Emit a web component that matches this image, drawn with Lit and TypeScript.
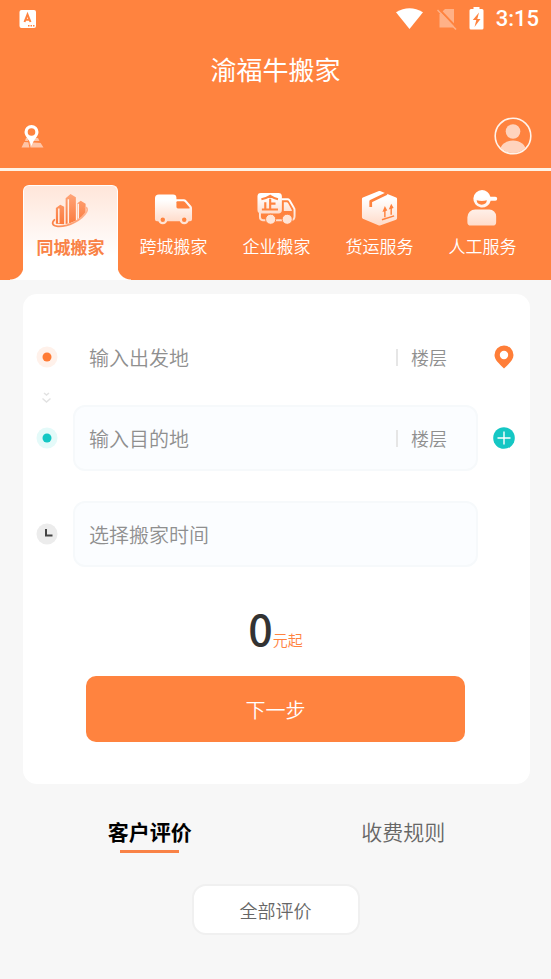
import { LitElement, html, css, svg } from "lit";
import { customElement, state } from "lit/decorators.js";
import { classMap } from "lit/directives/class-map.js";

const fade = svg`<defs>
  <linearGradient id="g" x1="0" y1="0" x2="0" y2="1">
    <stop offset="0.2" stop-color="#fff" /><stop offset="1" stop-color="#ffdccb" />
  </linearGradient>
</defs>`;

const cityIcon = html`<svg class="service-icon" viewBox="0 0 40 40" aria-hidden="true">
  <defs>
    <linearGradient id="c" x1="0" y1="0" x2="0" y2="1">
      <stop offset="0" stop-color="#ffa579" /><stop offset="1" stop-color="#fb7a3c" />
    </linearGradient>
    <linearGradient id="d" x1="0" y1="0" x2="1" y2="0">
      <stop offset="0" stop-color="#fb8449" /><stop offset="1" stop-color="#ffb592" />
    </linearGradient>
  </defs>
  <path fill="url(#c)" d="M5 17.500 9.500 14l4 2.200V34L5 33.500zM15 7.500 20 3l5.500 3.500v24q-5 2.500-10.500 3.300zM27 12.500l3.500-2.500 5 3v9q-3 4.500-8.500 7.500z" />
  <path fill="none" stroke="#fff1e9" stroke-width="1.500" d="M8 18v15M17.800 8.500V33M28 13v15.500" />
  <path fill="none" stroke="url(#d)" stroke-width="1.800" stroke-linecap="round" d="M3.500 29.500C.500 32.500 1 35.800 7 36.300c11 .6 25-7 29.500-15 1.200-2.200.6-4-1-4.500" />
</svg>`;

const truckIcon = html`<svg class="service-icon" viewBox="0 0 40 40" aria-hidden="true">
  ${fade}
  <path fill="url(#g)" d="M5 4.500h14.500a3.500 3.500 0 0 1 3.500 3.500v1.500h7.500q1.600 0 2.700 1.200l5 5.800q.8 1 .8 2.200V30a2 2 0 0 1-2 2H3a2 2 0 0 1-2-2V8.500a4 4 0 0 1 4-4z" />
  <path fill="#ff833f" d="M24 11.500h6q1 0 1.700.8l4.800 5.700q.5.900-.5.900H24.500q-1.500 0-1.500-1.500v-4.900q0-1 1-1z" />
  <g fill="#ff833f" stroke="#ffe4d6" stroke-width="2.400"><circle cx="9" cy="30.500" r="3.500" /><circle cx="31" cy="30.500" r="3.500" /></g>
</svg>`;

const companyIcon = html`<svg class="service-icon" viewBox="0 0 40 40" aria-hidden="true">
  ${fade}
  <path fill="none" stroke="url(#g)" stroke-width="2" stroke-linejoin="round" d="M3 23v4.500Q3 31 6 31h28.500q4 0 4-4v-6.500q0-1.200-.7-2.300l-4.500-7.700q-.8-1-2-1H25" />
  <path fill="url(#g)" d="M27.500 12.500h3q.8 0 1.300.8l3.600 6.700q.4.800.4 1.500h-8.300zM4 3h18a3.500 3.500 0 0 1 3.500 3.500v14A3.500 3.500 0 0 1 22 24H4a3.500 3.500 0 0 1-3.500-3.500v-14A3.500 3.500 0 0 1 4 3z" />
  <path fill="none" stroke="#ff833f" stroke-width="2.200" d="M4.500 9.500q5-1 9-3.500 4 2.500 8 3.500M13.500 9v10.500M13.500 14h5.500M8.500 12.500v7M5 20h16.500" />
  <g fill="#ffe4d6" stroke="#ff833f"><circle cx="14" cy="30" r="5.200" /><circle cx="31" cy="30" r="5.200" /></g>
</svg>`;

const boxIcon = html`<svg class="service-icon" viewBox="0 0 40 40" aria-hidden="true">
  ${fade}
  <path fill="url(#g)" stroke="url(#g)" stroke-width="3" stroke-linejoin="round" d="M20 2.500 36.500 9v20L20 35 3.500 28V9z" />
  <path fill="none" stroke="#ff833f" stroke-width="2.800" stroke-linejoin="round" d="M27.500 3.500 11 11.500v6" />
  <path fill="none" stroke="#ff833f" stroke-width="1.500" d="M22.500 30.500 35 26.500M25.500 28v-9M32 25.500v-9" />
  <path fill="#ff833f" d="m25.500 16.500 2.500 4.500-5 1.500zM32 14l2.500 4.500-5 1.500z" />
</svg>`;

const workerIcon = html`<svg class="service-icon" viewBox="0 0 40 40" aria-hidden="true">
  ${fade}
  <path fill="url(#g)" d="M19.500 0a9 9 0 0 1 8.600 7h5a2 2 0 0 1 0 4h-4.700A9 9 0 1 1 19.500 0zM12.500 20h14.500a7 7 0 0 1 7 7v6a3.500 3.500 0 0 1-3.500 3.500H8A3.500 3.500 0 0 1 4.500 33v-5a8 8 0 0 1 8-8z" />
  <path fill="#ff833f" d="M14 10.500q5.500 1.500 10.500 0-.5 4.500-5.300 4.500T14 10.500z" />
</svg>`;

const services = [
  { name: "同城搬家", icon: cityIcon },
  { name: "跨城搬家", icon: truckIcon },
  { name: "企业搬家", icon: companyIcon },
  { name: "货运服务", icon: boxIcon },
  { name: "人工服务", icon: workerIcon },
];

@customElement("app-root")
export class AppRoot extends LitElement {
  @state() private service = 0;
  @state() private section = 0;

  static styles = css`
    :host {
      display: block;
      min-height: 100vh;
      background: #f7f7f7;
      color: #666;
      font-family: "Noto Sans CJK SC", sans-serif;
      font-weight: 350;
    }
    * { box-sizing: border-box; }
    svg { display: block; }
    button, input { font: inherit; color: inherit; margin: 0; padding: 0; border: 0; background: none; }
    button { cursor: pointer; }
    .top { background: #ff833f; color: #fff; }
    .status { display: flex; align-items: center; height: 38px; padding: 0 12px 0 19px; }
    .status .app { margin-right: auto; }
    .signals { display: flex; align-items: center; gap: 12px; }
    .wifi { margin-right: 2px; }
    .clock { font: 500 22px/24px Roboto, sans-serif; }
    h1 { margin: 0; height: 62px; font-size: 26px; line-height: 62px; font-weight: 400; text-align: center; }
    .account { display: flex; align-items: center; justify-content: space-between; height: 68px; padding: 4px 19px 0 20px; }
    .services { display: flex; height: 112px; padding: 14px 17px 0 19px; border-top: 3px solid #fff3e6; }
    .service { position: relative; flex: 1; display: flex; flex-direction: column; align-items: center; gap: 5px; margin: 0 4px; padding-top: 4px; border: solid transparent; border-width: 1px 1px 0; font-size: 17px; line-height: 24px; white-space: nowrap; }
    .service-icon { width: 39px; height: 39px; }
    .service.active { padding-top: 5px; background: linear-gradient(#ffe6da, #fff 75%); border-color: #fff; border-radius: 6px 6px 0 0; color: #f98246; font-weight: 700; }
    .service.active::before, .service.active::after { content: ""; position: absolute; bottom: 0; width: 14px; height: 14px; }
    .service.active::before { right: 100%; background: radial-gradient(circle at 0 0, transparent 13px, #fff 14px); }
    .service.active::after { left: 100%; background: radial-gradient(circle at 100% 0, transparent 13px, #fff 14px); }
    .card { margin: 14px 21px 0 23px; padding: 30px 15px 42px 13px; border-radius: 14px; background: #fff; }
    .row { display: grid; grid-template-columns: 22px 1fr 22px; column-gap: 15px; align-items: center; }
    .row + .row { margin-top: 30px; }
    .field { display: flex; align-items: center; height: 66px; border: 2px solid transparent; border-radius: 12px; padding: 0 14px; }
    .field.boxed { background: #fbfdff; border-color: #f6f9fb; }
    .field input { min-width: 0; height: 40px; outline: none; }
    .place { flex: 1; font-size: 20px; }
    .floor { width: 66px; padding-left: 15px; font-size: 18px; background: linear-gradient(#e6e6e6, #e6e6e6) 0 50% / 2px 17px no-repeat; }
    input::placeholder { color: #8f8f8f; opacity: 1; }
    .swap { display: flex; align-items: center; width: 22px; height: 15px; }
    .price { display: flex; align-items: baseline; justify-content: center; margin: 28px 0 17px; line-height: 20px; color: #ff833f; font-size: 15px; }
    .price strong { color: #333; font-size: 43px; line-height: 64px; font-weight: 500; }
    .next { display: block; width: 79%; height: 66px; margin: 0 auto; border-radius: 10px; background: #ff833f; color: #fff; font-size: 20px; }
    .sections { display: flex; margin: 30px 21px 0 23px; }
    .sections div { flex: 1; display: flex; justify-content: center; }
    .section { display: flex; flex-direction: column; align-items: center; gap: 2px; font-size: 21px; line-height: 34px; }
    .section::after { content: ""; width: 59px; height: 3px; }
    .section.active { color: #000; font-weight: 700; }
    .section.active::after { background: #f98246; }
    .all { display: block; width: 168px; height: 51px; margin: 31px auto 0; border: 2px solid #f0f0f0; border-radius: 14px; background: #fff; font-size: 18px; }
  `;

  render() {
    return html`
      <header class="top">
        <div class="status">
          <svg class="app" width="18" height="20" viewBox="0 0 18 20" aria-hidden="true">
            <rect x=".5" y="1" width="16.500" height="18" rx="2" fill="#fff" />
            <path d="m5.500 13 3-7.500 3 7.500M6.500 10.800h4" fill="none" stroke="#ff833f" stroke-width="2" />
            <path d="M9 16.800h7" stroke="#ff833f" stroke-width="1.500" stroke-dasharray="1.500 1" />
          </svg>
          <div class="signals">
            <svg class="wifi" width="28" height="24" viewBox="0 0 28 24" aria-hidden="true"><path fill="#fff" d="M14.500 22 1 5.200Q14.500-2.500 28 5.200z" /></svg>
            <svg width="20" height="24" viewBox="0 0 20 24" aria-hidden="true">
              <path fill="#ffb187" d="M8 2h9v18.500H2.500V7.500z" />
              <path stroke="#ff833f" stroke-width="2" d="m2 2 18 19" /><path stroke="#ffb187" stroke-width="1.500" d="m.500 3 18.500 19.500" />
            </svg>
            <svg width="15" height="24" viewBox="0 0 15 24" aria-hidden="true">
              <path fill="#fff" d="M4.500 0h6v2H13q1.500 0 1.500 1.500V21q0 1.500-1.500 1.500H2Q.500 22.500.500 21V3.500Q.500 2 2 2h2.500z" />
              <path fill="#ff833f" d="M10 5.500 3.800 13h3.500L5.500 20l6-8H8.300z" />
            </svg>
            <span class="clock">3:15</span>
          </div>
        </div>
        <h1>渝福牛搬家</h1>
        <div class="account">
          <button aria-label="选择城市">
            <svg width="25" height="24" viewBox="0 0 25 24">
              <path fill="#ffc5a7" d="M6 14h12l1.500 3H5zM4.200 18H20l3.500 5.500H1.500z" />
              <path stroke="#ff833f" d="m4 17.500 18 1M8 14l2 10" />
              <path fill="#fff" fill-rule="evenodd" d="M11.500 1a7 7 0 0 1 7 7c0 4.500-4.500 6.500-7 14-2.500-7.500-7-9.500-7-14a7 7 0 0 1 7-7zm0 3.200a3.800 3.800 0 1 0 0 7.600 3.800 3.800 0 0 0 0-7.600z" />
            </svg>
          </button>
          <button aria-label="个人中心">
            <svg width="38" height="38" viewBox="0 0 38 38">
              <clipPath id="r"><circle cx="19" cy="19" r="17" /></clipPath>
              <g fill="#ffd3bd" clip-path="url(#r)"><circle cx="19" cy="14.500" r="7.300" /><ellipse cx="19" cy="34" rx="13" ry="10.500" /></g>
              <circle cx="19" cy="19" r="17.800" fill="none" stroke="#fff3ea" stroke-width="1.600" />
            </svg>
          </button>
        </div>
        <nav class="services">
          ${services.map(
            (s, i) => html`<button class=${classMap({ service: true, active: i === this.service })} @click=${() => (this.service = i)}>
              ${s.icon}<span>${s.name}</span>
            </button>`
          )}
        </nav>
      </header>
      <form class="card" @submit=${(e: Event) => e.preventDefault()}>
        <div class="row">
          <svg width="22" height="22" viewBox="0 0 22 22" aria-hidden="true"><circle cx="11" cy="11" r="10.500" fill="#fff1ea" /><circle cx="11" cy="11" r="4.500" fill="#ff7b35" /></svg>
          <div class="field">
            <input class="place" placeholder="输入出发地" aria-label="出发地" />
            <input class="floor" placeholder="楼层" aria-label="出发地楼层" />
          </div>
          <button type="button" aria-label="定位">
            <svg width="22" height="24" viewBox="0 0 22 24"><path fill="#ff7e38" fill-rule="evenodd" d="M11 .500a9.500 9.500 0 0 1 9.500 9.500c0 5-4.500 8.500-9.500 13.500C6 18.500 1.500 15 1.500 10A9.500 9.500 0 0 1 11 .500zm0 5.300a4.200 4.200 0 1 0 0 8.400 4.200 4.200 0 0 0 0-8.400z" /></svg>
          </button>
        </div>
        <div class="swap">
          <svg width="22" height="14" viewBox="0 0 22 14" aria-hidden="true"><path fill="none" stroke="#e2e2e2" stroke-width="1.500" d="m8 2 2.500 2L13 2M6.500 7.500l4 3.500 4-3.500" /></svg>
        </div>
        <div class="row">
          <svg width="22" height="22" viewBox="0 0 22 22" aria-hidden="true"><circle cx="11" cy="11" r="10.500" fill="#e4faf9" /><circle cx="11" cy="11" r="4.500" fill="#15c7c4" /></svg>
          <div class="field boxed">
            <input class="place" placeholder="输入目的地" aria-label="目的地" />
            <input class="floor" placeholder="楼层" aria-label="目的地楼层" />
          </div>
          <button type="button" aria-label="添加目的地">
            <svg width="22" height="22" viewBox="0 0 22 22"><circle cx="11" cy="11" r="10.800" fill="#15c7c4" /><path stroke="#fff" stroke-width="1.400" d="M11 4.500v13M4.500 11h13" /></svg>
          </button>
        </div>
        <div class="row">
          <svg width="22" height="22" viewBox="0 0 22 22" aria-hidden="true"><circle cx="11" cy="11" r="10.500" fill="#ececec" /><path fill="none" stroke="#444" stroke-width="2" d="M10 6v6.500h6.500" /></svg>
          <div class="field boxed"><input class="place" placeholder="选择搬家时间" aria-label="搬家时间" /></div>
        </div>
        <div class="price"><strong>0</strong><span>元起</span></div>
        <button class="next">下一步</button>
      </form>
      <nav class="sections">
        ${["客户评价", "收费规则"].map(
          (name, i) => html`<div>
            <button class=${classMap({ section: true, active: i === this.section })} @click=${() => (this.section = i)}>${name}</button>
          </div>`
        )}
      </nav>
      <button class="all">全部评价</button>
    `;
  }
}
